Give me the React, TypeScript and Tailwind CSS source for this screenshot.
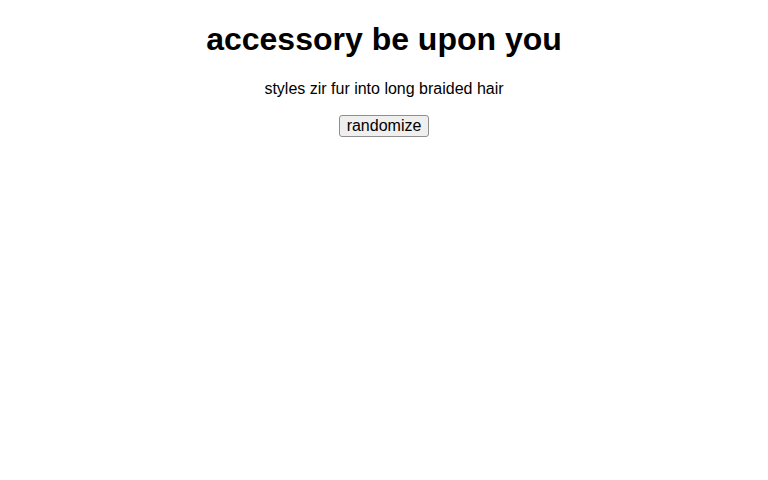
export default function App() {
  return (
    <div
      className="text-center text-black bg-white min-h-[480px]"
      style={{ fontFamily: '"Liberation Sans", Arial, sans-serif' }}
    >
      <h1 className="text-[32px] leading-[normal] font-bold my-[21.44px] pt-0">
        accessory be upon you
      </h1>
      <p className="text-[16px] leading-[normal] my-4">styles zir fur into long braided hair</p>
      <button className="text-[16px] leading-[normal] px-[7px] py-px border border-[#8f8f8f] rounded-[3px] bg-[#efefef] text-black">
        randomize
      </button>
    </div>
  );
}
